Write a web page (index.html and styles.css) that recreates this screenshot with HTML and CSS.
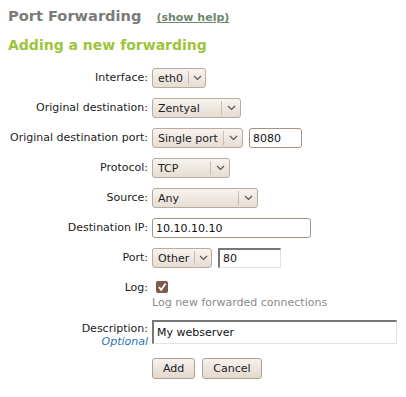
FILE: index.html
```html
<!DOCTYPE html>
<html lang="en">
<head>
    <meta charset="UTF-8">
    <title>Port Forwarding</title>
    <link rel="stylesheet" href="styles.css">
</head>
<body>
    <div class="title-line">
        <h1>Port Forwarding</h1>
        <a href="#" class="help">(show help)</a>
    </div>
    <h2>Adding a new forwarding</h2>

    <form class="form">
        <label class="lbl">Interface:</label>
        <div class="ctl">
            <div class="select w-iface"><span class="val">eth0</span><span class="arrow"><svg width="9" height="6" viewBox="0 0 9 6"><path d="M1 1 L4.5 4.5 L8 1" fill="none" stroke="#555" stroke-width="1.2"/></svg></span></div>
        </div>

        <label class="lbl">Original destination:</label>
        <div class="ctl">
            <div class="select w-dest"><span class="val">Zentyal</span><span class="arrow"><svg width="9" height="6" viewBox="0 0 9 6"><path d="M1 1 L4.5 4.5 L8 1" fill="none" stroke="#555" stroke-width="1.2"/></svg></span></div>
        </div>

        <label class="lbl">Original destination port:</label>
        <div class="ctl">
            <div class="select w-single"><span class="val">Single port</span><span class="arrow"><svg width="9" height="6" viewBox="0 0 9 6"><path d="M1 1 L4.5 4.5 L8 1" fill="none" stroke="#555" stroke-width="1.2"/></svg></span></div>
            <input type="text" class="text w-port" value="8080">
        </div>

        <label class="lbl">Protocol:</label>
        <div class="ctl">
            <div class="select w-proto"><span class="val">TCP</span><span class="arrow"><svg width="9" height="6" viewBox="0 0 9 6"><path d="M1 1 L4.5 4.5 L8 1" fill="none" stroke="#555" stroke-width="1.2"/></svg></span></div>
        </div>

        <label class="lbl">Source:</label>
        <div class="ctl">
            <div class="select w-source"><span class="val">Any</span><span class="arrow"><svg width="9" height="6" viewBox="0 0 9 6"><path d="M1 1 L4.5 4.5 L8 1" fill="none" stroke="#555" stroke-width="1.2"/></svg></span></div>
        </div>

        <label class="lbl">Destination IP:</label>
        <div class="ctl">
            <input type="text" class="text w-ip" value="10.10.10.10">
        </div>

        <label class="lbl">Port:</label>
        <div class="ctl">
            <div class="select w-other"><span class="val">Other</span><span class="arrow"><svg width="9" height="6" viewBox="0 0 9 6"><path d="M1 1 L4.5 4.5 L8 1" fill="none" stroke="#555" stroke-width="1.2"/></svg></span></div>
            <input type="text" class="text sunken w-dport" value="80">
        </div>

        <label class="lbl">Log:</label>
        <div class="ctl ctl-col">
            <span class="check"><svg width="12" height="12" viewBox="0 0 12 12"><path d="M3 6 L5.2 9 L9.5 2.5" fill="none" stroke="#fff" stroke-width="1.8"/></svg></span>
            <span class="hint">Log new forwarded connections</span>
        </div>

        <label class="lbl lbl-desc">Description:<span class="optional">Optional</span></label>
        <div class="ctl ctl-desc">
            <input type="text" class="text sunken w-desc" value="My webserver">
        </div>

        <span></span>
        <div class="ctl buttons">
            <button type="button" class="btn">Add</button>
            <button type="button" class="btn">Cancel</button>
        </div>
    </form>
</body>
</html>
```

FILE: styles.css
```css
* {
    box-sizing: border-box;
}

body {
    margin: 0;
    padding: 7px 8px;
    font-family: "DejaVu Sans", Verdana, sans-serif;
    font-size: 11px;
    color: #222;
    background: #fff;
}

.title-line {
    display: flex;
    align-items: baseline;
    gap: 15px;
}

h1 {
    margin: 0;
    font-size: 14.6px;
    color: #7b7b7b;
}

.help {
    font-size: 11px;
    font-weight: bold;
    color: #70866a;
}

h2 {
    margin: 13px 0 15px;
    font-size: 14px;
    color: #9fc33b;
}

.form {
    display: grid;
    grid-template-columns: 140px 1fr;
    column-gap: 4px;
    row-gap: 10px;
    align-items: start;
}

.lbl {
    text-align: right;
    padding-top: 3px;
    white-space: nowrap;
}

.ctl {
    display: flex;
    align-items: center;
    gap: 6px;
}

.ctl-col {
    flex-direction: column;
    align-items: flex-start;
    gap: 3px;
}

.select {
    display: flex;
    align-items: center;
    height: 20px;
    border: 1px solid #b9ab9d;
    border-radius: 3px;
    background: linear-gradient(#f7f3ef, #e6ddd4);
}

.select .val {
    flex: 1;
    padding: 0 5px;
    white-space: nowrap;
}

.select .arrow {
    display: flex;
    align-items: center;
    justify-content: center;
    width: 19px;
    height: 14px;
    border-left: 1px solid #c8bcb0;
}

.w-iface { width: 54px; }
.w-dest { width: 89px; }
.w-single { width: 91px; }
.w-proto { width: 78px; }
.w-source { width: 106px; }
.w-other { width: 60px; }

.text {
    height: 20px;
    padding: 0 3px;
    font-family: inherit;
    font-size: 11px;
    color: #111;
    border: 1px solid #a39382;
    border-radius: 3px;
    background: #fff;
}

.sunken {
    border-radius: 0;
    border-color: #777 #e6e1dc #e6e1dc #777;
    border-width: 2px 1px 1px 2px;
}

.w-port { width: 53px; }
.w-ip { width: 159px; }
.w-dport { width: 63px; }
.w-desc { width: 245px; height: 24px; }

.check {
    display: block;
    width: 12px;
    height: 12px;
    margin: 3px 0 0 4px;
    background: #7d5a4b;
    border-radius: 2px;
}

.hint {
    color: #8b8b8b;
}

.lbl-desc {
    display: flex;
    flex-direction: column;
    align-items: flex-end;
    padding-top: 3px;
    line-height: 13px;
}

.ctl-desc {
    padding-top: 1px;
}

.optional {
    color: #2a72b8;
    font-style: italic;
    font-size: 11px;
}

.buttons {
    gap: 7px;
}

.btn {
    height: 21px;
    padding: 0 10px;
    font-family: inherit;
    font-size: 11px;
    color: #222;
    border: 1px solid #ad9f91;
    border-radius: 3px;
    background: linear-gradient(#f6f2ee, #e2d8ce);
}
```
